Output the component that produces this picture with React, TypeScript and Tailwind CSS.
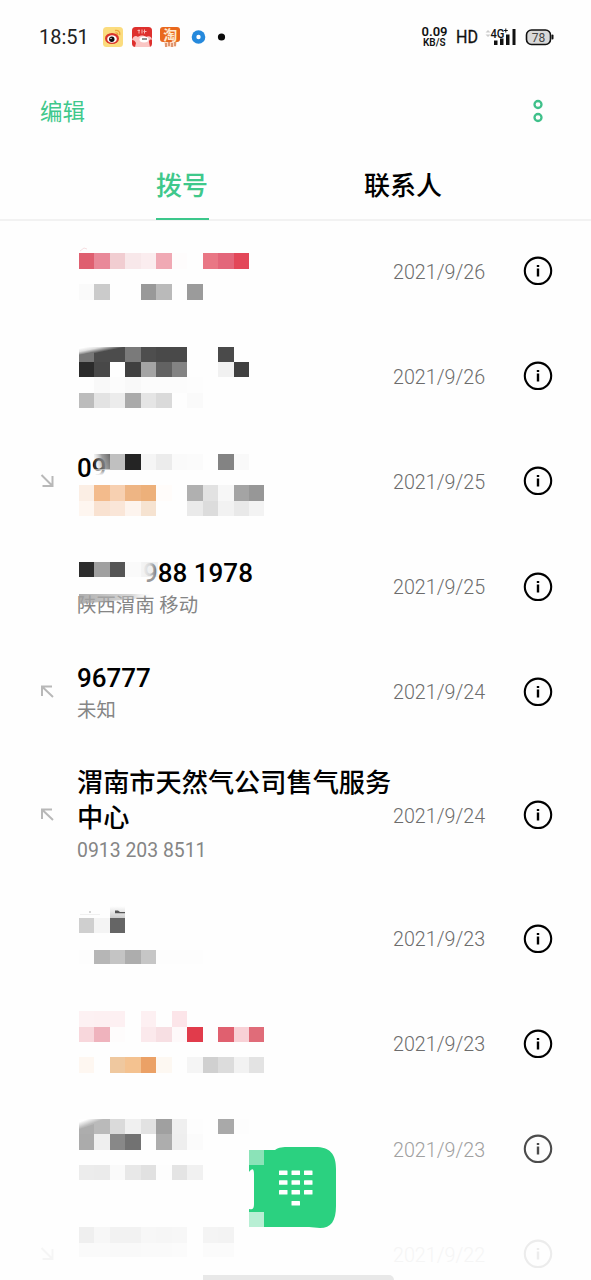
import type { ReactNode } from 'react'

type Direction = 'in' | 'out' | 'none'
type Strip = { y: number; h: number; cells: string }

type Call = {
  name?: string
  detail?: string
  date: string
  direction: Direction
  tall?: boolean
  strips?: Strip[]
  extra?: ReactNode
  nameClass?: string
  dateClass?: string
  infoClass?: string
  arrowClass?: string
}

const CELL = 15.45

// one hex colour per cell, "-" leaves the cell empty
function Mosaic({ strips = [], children }: { strips?: Strip[]; children?: ReactNode }) {
  return (
    <svg className="absolute -top-px left-0" width="200" height="105" viewBox="0 0 200 105">
      {children}
      {strips.map((strip) =>
        strip.cells.split(' ').map((color, i) => {
          if (color === '-') return null
          const x = Math.round(1 + i * CELL)
          const w = Math.round(1 + (i + 1) * CELL) - x
          return <rect key={`${strip.y}-${i}`} x={x} y={strip.y} width={w} height={strip.h} fill={`#${color}`} />
        }),
      )}
    </svg>
  )
}

const calls: Call[] = [
  {
    date: '2021/9/26',
    direction: 'none',
    strips: [
      { y: 35, h: 16, cells: 'df5f70 e98999 f1cdd1 f8e8ea fbedef f0a9b4 fefcfc - e97785 e3667a e34759' },
      { y: 66, h: 16, cells: 'fafafa cbcbcb - - 999999 bababa - 9b9b9b' },
    ],
    extra: <path d="M2 33 6 30 9 31" stroke="#f6dfe2" fill="none" />,
  },
  {
    date: '2021/9/26',
    direction: 'none',
    strips: [
      { y: 24, h: 15, cells: '- - - 7a7a7a 4e4e4e 494949 494949 - - 4a4a4a' },
      { y: 39, h: 15, cells: '2b2b2b 484848 fefefe 404040 a4a4a4 626262 838383 - - f1f1f1 404040' },
      { y: 54, h: 16, cells: '- f9f9f9 fcfcfc f9f9f9 fcfcfc fcfcfc fcfcfc fdfdfd' },
      { y: 70, h: 15, cells: 'bcbcbc e3e3e3 ececec aaaaaa e5e5e5 dadada - fafafa' },
    ],
    extra: (
      <>
        <defs>
          <linearGradient id="smearDark" gradientUnits="userSpaceOnUse" x1="20" y1="21.500" x2="22.200" y2="32">
            <stop offset="0" stopColor="#fff" />
            <stop offset="0.3" stopColor="#e0e0e0" />
            <stop offset="0.75" stopColor="#4c4c4c" />
          </linearGradient>
        </defs>
        <path d="M1 24H47V39H1Z" fill="url(#smearDark)" />
        <path d="M1 32 16 29V39H1Z" fill="#777" />
      </>
    ),
  },
  {
    name: '09',
    date: '2021/9/25',
    direction: 'in',
    nameClass: 'mb-[29px]',
    strips: [
      { y: 26, h: 16, cells: '- - c0c0c0 242424 f5f5f5 ececec fafafa fbfbfb - 838383 f9f9f9' },
      { y: 57, h: 16, cells: 'fbeee4 f3bb8c f7d0b1 eeb584 edb07a fffcfa - b0b0b0 e2e2e2 f7f7f7 a4a4a4 979797' },
      { y: 73, h: 15, cells: 'fef6f0 f9e2d1 fae6d8 fdf4ee f6e3d1 - - eaeaea dcdcdc f2f2f2 e9e9e9 f3f3f3' },
    ],
    extra: (
      <>
        <defs>
          <linearGradient id="smearNine" x1="0" y1="0.3" x2="1" y2="0">
            <stop offset="0" stopColor="#ddd" stopOpacity="0.2" />
            <stop offset="0.5" stopColor="#8c8c8c" stopOpacity="0.85" />
            <stop offset="1" stopColor="#6a6a6a" />
          </linearGradient>
          <linearGradient id="fadeNine" x1="0" y1="0" x2="0" y2="1">
            <stop offset="0" stopColor="#fefefe" stopOpacity="0.5" />
            <stop offset="0.5" stopColor="#fefefe" />
          </linearGradient>
        </defs>
        <path d="M16 26H32V42H16Z" fill="url(#smearNine)" />
        <path d="M14 41H32V54H14Z" fill="url(#fadeNine)" />
      </>
    ),
  },
  {
    name: '988 1978',
    detail: '陕西渭南 移动',
    date: '2021/9/25',
    direction: 'none',
    nameClass: 'pl-[66px]',
    strips: [{ y: 29, h: 15, cells: '2d2d2d a0a0a0 555555 fafafa' }],
    extra: (
      <>
        <defs>
          <linearGradient id="smearCity" x1="0" y1="0" x2="1" y2="0">
            <stop offset="0" stopColor="#a0a0a0" stopOpacity="0.85" />
            <stop offset="0.7" stopColor="#bbb" stopOpacity="0.6" />
            <stop offset="1" stopColor="#fff" stopOpacity="0" />
          </linearGradient>
          <linearGradient id="smearDigit" x1="0" y1="0" x2="1" y2="0">
            <stop offset="0" stopColor="#f4f4f4" />
            <stop offset="0.5" stopColor="#eee" stopOpacity="0.9" />
            <stop offset="1" stopColor="#e4e4e4" stopOpacity="0.45" />
          </linearGradient>
        </defs>
        <path d="M63 29H80V44H63Z" fill="url(#smearDigit)" />
        <path d="M63 44H80V54H63Z" fill="#fefefe" fillOpacity="0.6" />
        <path d="M1 61H76V64L1 71Z" fill="url(#smearCity)" />
      </>
    ),
  },
  { name: '96777', detail: '未知', date: '2021/9/24', direction: 'out' },
  { name: '渭南市天然气公司售气服务中心', detail: '0913 203 8511', date: '2021/9/24', direction: 'out', tall: true },
  {
    date: '2021/9/23',
    direction: 'none',
    strips: [
      { y: 33, h: 15, cells: 'cfcfcf f4f4f4 656565' },
      { y: 65, h: 14, cells: 'fdfdfd b6b6b6 c4c4c4 adadad c6c6c6 fdfdfd fdfdfd fdfdfd' },
    ],
    extra: (
      <>
        <defs>
          <linearGradient id="smearTop" x1="0" y1="0" x2="0" y2="1">
            <stop offset="0" stopColor="#fff" />
            <stop offset="1" stopColor="#ccc" />
          </linearGradient>
        </defs>
        <path d="M32 21H47V33H32Z" fill="url(#smearTop)" />
        <path d="M37 25.500h3l2 1.500h5v1.200h-10z" fill="#555" />
        <path d="M2 29.500H22" stroke="#f0f0f0" />
        <path d="M11 26h2v2h-2z" fill="#d5d5d5" />
      </>
    ),
  },
  {
    date: '2021/9/23',
    direction: 'none',
    strips: [
      { y: 21, h: 16, cells: 'fdf1f3 fdf0f2 fdf0f2 - fdf0f2 - fce5e9' },
      { y: 37, h: 15, cells: 'f8d7dc efb3bd fefcfc - fbe9ec f7dfe3 fef9fa e13b4b - e0606f f8d1d6 e06c79' },
      { y: 67, h: 16, cells: 'fef7f1 - efc89f f4c290 eba166 fdf8f2 - f5f5f5 d0d0d0 dcdcdc f2f2f2 e3e3e3' },
    ],
  },
  {
    date: '2021/9/23',
    direction: 'none',
    dateClass: 'text-[#a0a0a0]',
    infoClass: 'text-[#4c4c4c]',
    strips: [
      { y: 24, h: 15, cells: '- - dadada f0f0f0 e2e2e2 a0a0a0 efefef fdfdfd - a9a9a9 fdfdfd' },
      { y: 39, h: 16, cells: 'ababab efefef 888888 727272 - adadad eeeeee fbfbfb' },
      { y: 70, h: 15, cells: 'ececec ebebeb fafafa e8e8e8 e1e1e1 fdfdfd e4e4e4 f1f1f1' },
    ],
    extra: (
      <>
        <defs>
          <linearGradient id="smearLight" gradientUnits="userSpaceOnUse" x1="12" y1="23" x2="15" y2="31">
            <stop offset="0" stopColor="#fff" />
            <stop offset="0.7" stopColor="#bababa" />
          </linearGradient>
        </defs>
        <path d="M1 24H32V39H1Z" fill="url(#smearLight)" />
        <path d="M1 34 16 29V39H1Z" fill="#adadad" />
      </>
    ),
  },
  {
    date: '2021/9/22',
    direction: 'in',
    dateClass: 'text-[#f5f5f5]',
    infoClass: 'text-[#ececec]',
    arrowClass: 'text-[#f5f5f5]',
    strips: [
      { y: 26, h: 16, cells: 'efefef f7f7f7 f2f2f2 f2f2f2 f7f7f7 f6f6f6 f7f7f7 - f4f4f4 f3f3f3' },
      { y: 42, h: 14, cells: 'fafafa fafafa f9f9f9 f9f9f9 fafafa fafafa fbfbfb - fbfbfb fbfbfb' },
    ],
  },
]

function StatusBar() {
  return (
    <header className="flex h-[73px] shrink-0 items-center justify-between pl-[39px] pr-[37px]">
      <div className="flex items-center">
        <span className="w-[64px] text-[20px] leading-none text-[#222]">18:51</span>
        <svg width="125" height="24" viewBox="0 0 125 24">
          {/* weibo */}
          <rect x="0" y="2" width="20" height="20" rx="3.500" fill="#fbdc7e" />
          <ellipse cx="9" cy="13.500" rx="7" ry="5.500" fill="#d9352b" />
          <ellipse cx="9" cy="14" rx="4.800" ry="3.800" fill="#fff" />
          <circle cx="8.800" cy="14.200" r="2.700" fill="#111" />
          <circle cx="8" cy="13.400" r="0.700" fill="#fff" />
          <path d="M12 5.500c3-.8 5.500 1.200 4.700 4.500M12.500 8c1.500-.3 2.500.5 2.200 2" stroke="#eda33c" strokeWidth="1.300" fill="none" />
          {/* jd */}
          <rect x="29" y="2" width="20" height="20" rx="3.500" fill="#de302d" />
          <path d="M29 15c1-4 4-5 6-3 2-2 6-2 8 0 3-2 6 0 6 3-2-1-3 0-3 2l1 5H32l1-4c-1-2-2-3-4-3z" fill="#fac6c4" />
          <ellipse cx="41" cy="14.500" rx="4.500" ry="3" fill="#fff" />
          <path d="M39 14h5" stroke="#555" strokeWidth="1.300" />
          <path d="M36 4.500v4M34.500 5.500H37M39 4.500v4M41.500 4.500v4M40.500 6.500h3" stroke="#f7b9b6" strokeWidth="1" />
          {/* taobao */}
          <rect x="57" y="2" width="20" height="15" rx="3" fill="#e9681d" />
          <path d="M61 17h13l-1 5H62z" fill="#fbd9c4" />
          <text x="67.200" y="15" textAnchor="middle" fontSize="14" fontWeight="700" fill="#fde9d0">淘</text>
          <path d="M63 18v4M66 17v4M69 18v4M72 17v4" stroke="#c4531a" strokeWidth="1" />
          {/* browser */}
          <circle cx="95.500" cy="12" r="6.800" fill="#2589dc" />
          <circle cx="95.500" cy="12" r="2.200" fill="#fff" />
          <circle cx="118.500" cy="12" r="3.600" fill="#0a0a0a" />
        </svg>
      </div>
      <svg width="133" height="24" viewBox="0 0 133 24" fill="#111">
        <text x="0.500" y="11" fontSize="13" fontWeight="600" textLength="26" lengthAdjust="spacingAndGlyphs">0.09</text>
        <text x="2" y="20.500" fontSize="10.500" fontWeight="600" textLength="22.500" lengthAdjust="spacingAndGlyphs">KB/S</text>
        <text x="35" y="18.300" fontSize="18" textLength="22" lengthAdjust="spacingAndGlyphs" stroke="#111" strokeWidth="0.3">HD</text>
        <path d="M64.500 7.500 67 5l2.500 2.500zM64.500 9.500 67 12l2.500-2.500z" fill="#ccc" />
        <text x="69.500" y="12.500" fontSize="12" fontWeight="500" textLength="14" lengthAdjust="spacingAndGlyphs">4G</text>
        <path d="M82.800 5.500h4M84.800 3.500v4" stroke="#111" strokeWidth="1" />
        <path d="M73 15.500h3.500V20H73zM79 13.500h3.500V20H79zM85 9.500h3.500V20H85zM91.500 4h3v16h-3z" />
        <rect x="105.500" y="5" width="24" height="14.500" rx="5" fill="#d9d9d9" stroke="#111" strokeWidth="1.600" />
        <rect x="130.500" y="9.500" width="2" height="5" rx="1" />
        <text x="117.600" y="16.500" textAnchor="middle" fontSize="12" fill="#444">78</text>
      </svg>
    </header>
  )
}

function DirectionArrow({ direction, className = 'text-[#b8b8b8]' }: { direction: Direction; className?: string }) {
  return (
    <svg className={`shrink-0 ${className}`} width="14" height="16" viewBox="0 0 14 16" fill="none" stroke="currentColor" strokeWidth="2">
      {direction === 'out' && <path d="M2 12V2.500H12M2.500 3 13 13" />}
      {direction === 'in' && <path d="M12.500 3V13H2.500M1.500 2 12 12.500" />}
    </svg>
  )
}

function InfoIcon({ className = 'text-black' }: { className?: string }) {
  return (
    <svg className={`shrink-0 ${className}`} width="30" height="30" viewBox="0 0 30 30" fill="none" stroke="currentColor">
      <circle cx="15" cy="14.800" r="13.200" strokeWidth="2.100" />
      <path d="M15 12.500v8M15 9v2" strokeWidth="2.400" />
    </svg>
  )
}

function CallRow({ call }: { call: Call }) {
  return (
    <li className={`flex shrink-0 items-center pl-10 ${call.tall ? 'h-[141.500px]' : 'h-[105.200px]'}`}>
      <DirectionArrow direction={call.direction} className={call.arrowClass} />
      <div
        className={`relative ml-6 flex h-full w-[315px] shrink-0 flex-col justify-center ${
          call.tall ? 'text-[26.200px]' : 'whitespace-nowrap pt-[3px] text-[26px]'
        }`}
      >
        {call.name && (
          <p className={`-ml-px font-medium leading-[35px] text-black ${call.nameClass ?? ''}`}>{call.name}</p>
        )}
        {call.detail && <p className="-ml-px text-[19.400px] leading-[29px] text-[#858585]">{call.detail}</p>}
        {(call.strips || call.extra) && <Mosaic strips={call.strips}>{call.extra}</Mosaic>}
      </div>
      <time className={`w-[130px] shrink-0 pt-[3px] text-[19.700px] font-light leading-none ${call.dateClass ?? 'text-[#6c6c6c]'}`}>
        {call.date}
      </time>
      <InfoIcon className={call.infoClass} />
    </li>
  )
}

function DialpadButton() {
  return (
    <button type="button" aria-label="拨号盘" className="absolute left-[249px] top-[1146px]">
      <svg width="90" height="84" viewBox="0 0 90 84">
        <path d="M0 4H26C30 1 34 1 40 1H66C81 1 87 8 87 23V60C87 75 82 82 71 82L60 81H0V63C3 64 5 63 5 58V28C5 22 3 22 0 26Z" fill="#2bd180" />
        <path d="M0 4H15V19H0Z" fill="#8be3b8" />
        <path d="M0 66H15V81H0Z" fill="#b8efd4" />
        {[0, 1, 2].map((row) =>
          [0, 1, 2].map((col) => (
            <rect key={`${row}-${col}`} x={30 + col * 12.500} y={24.500 + row * 9.800} width="8.500" height="4.500" rx="0.500" fill="#fff" />
          )),
        )}
        <rect x="42.500" y="55" width="8.500" height="4.500" rx="0.500" fill="#fff" />
      </svg>
    </button>
  )
}

export default function App() {
  return (
    <main className="relative flex h-[1280px] w-[591px] flex-col overflow-hidden bg-[#fefefe] font-['Roboto','Noto_Sans_CJK_SC',sans-serif]">
      <StatusBar />
      <div className="flex h-[77px] shrink-0 items-center justify-between pl-10 pr-[46px]">
        <span className="pt-[3px] text-[22.500px] text-[#3fc88b]">编辑</span>
        <svg width="14" height="26" viewBox="0 0 14 26" fill="none" stroke="#3fc08a" strokeWidth="2.300">
          <circle cx="7" cy="5.500" r="3.500" />
          <circle cx="7" cy="18.500" r="3.500" />
        </svg>
      </div>
      <nav className="flex h-[71px] shrink-0 border-b-2 border-[#f2f2f2] pl-[156px] text-[26px] font-medium leading-[72px]">
        <span className="h-[70px] w-[53px] shrink-0 border-b-2 border-[#3cc78b] text-[#3fc88b]">拨号</span>
        <span className="ml-[155px] text-black">联系人</span>
      </nav>
      <ul className="-mt-[2.500px] flex shrink-0 flex-col">
        {calls.map((call, i) => (
          <CallRow key={i} call={call} />
        ))}
      </ul>
      <DialpadButton />
      <div className="absolute left-[203px] top-[1275px] h-[5px] w-[191px] rounded-tr-full bg-[#e8e8e8]" />
    </main>
  )
}
